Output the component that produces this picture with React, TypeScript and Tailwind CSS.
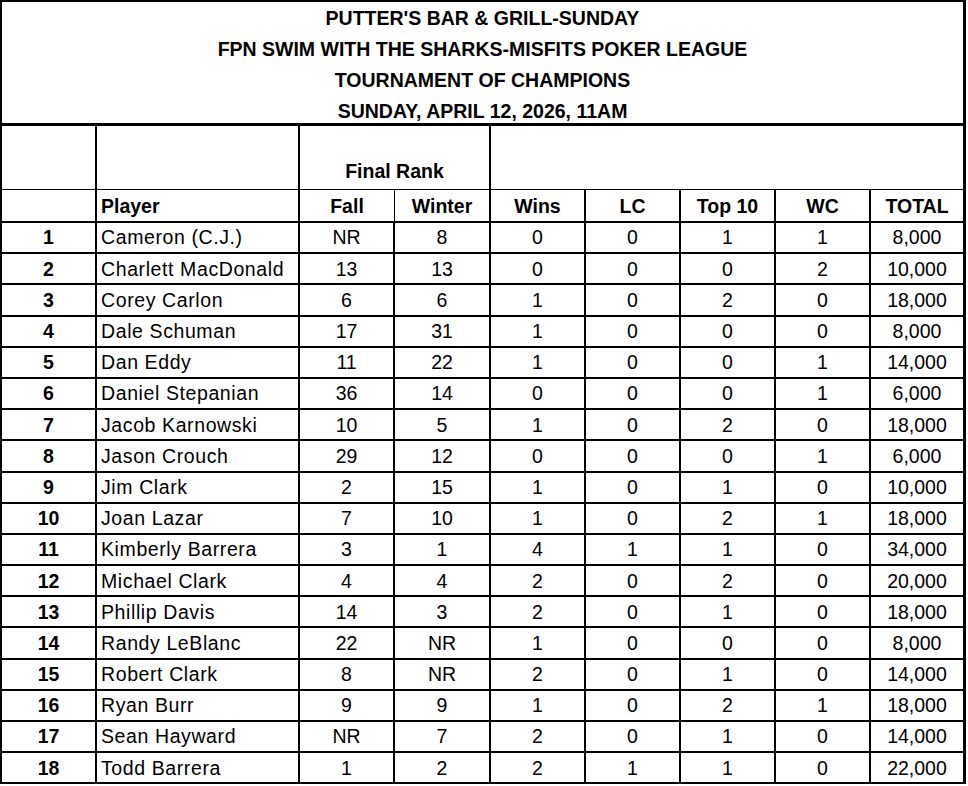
const titleLines = [
  "PUTTER'S BAR & GRILL-SUNDAY",
  "FPN SWIM WITH THE SHARKS-MISFITS POKER LEAGUE",
  "TOURNAMENT OF CHAMPIONS",
  "SUNDAY, APRIL 12, 2026, 11AM",
];

type Row = [string, string, string, number, number, number, number, string];

const rows: Row[] = [
  ["Cameron (C.J.)", "NR", "8", 0, 0, 1, 1, "8,000"],
  ["Charlett MacDonald", "13", "13", 0, 0, 0, 2, "10,000"],
  ["Corey Carlon", "6", "6", 1, 0, 2, 0, "18,000"],
  ["Dale Schuman", "17", "31", 1, 0, 0, 0, "8,000"],
  ["Dan Eddy", "11", "22", 1, 0, 0, 1, "14,000"],
  ["Daniel Stepanian", "36", "14", 0, 0, 0, 1, "6,000"],
  ["Jacob Karnowski", "10", "5", 1, 0, 2, 0, "18,000"],
  ["Jason Crouch", "29", "12", 0, 0, 0, 1, "6,000"],
  ["Jim Clark", "2", "15", 1, 0, 1, 0, "10,000"],
  ["Joan Lazar", "7", "10", 1, 0, 2, 1, "18,000"],
  ["Kimberly Barrera", "3", "1", 4, 1, 1, 0, "34,000"],
  ["Michael Clark", "4", "4", 2, 0, 2, 0, "20,000"],
  ["Phillip Davis", "14", "3", 2, 0, 1, 0, "18,000"],
  ["Randy LeBlanc", "22", "NR", 1, 0, 0, 0, "8,000"],
  ["Robert Clark", "8", "NR", 2, 0, 1, 0, "14,000"],
  ["Ryan Burr", "9", "9", 1, 0, 2, 1, "18,000"],
  ["Sean Hayward", "NR", "7", 2, 0, 1, 0, "14,000"],
  ["Todd Barrera", "1", "2", 2, 1, 1, 0, "22,000"],
];

const headers = ["Fall", "Winter", "Wins", "LC", "Top 10", "WC", "TOTAL"];

export default function App() {
  return (
    <div className="min-h-screen bg-white">
      <div className="w-[966px] border-l-2 border-t-2 border-r-[3px] border-black font-['Liberation_Sans',Arial,sans-serif] text-[19.5px] text-black">
        <div className="grid grid-cols-[95px_203px_95px_96px_95px_95px_95px_95px_92px]">
          {/* Title block */}
          <div className="col-span-9 h-[124px] border-b-[3px] border-black font-bold text-[19.5px] text-center">
            {titleLines.map((line) => (
              <div key={line} className="h-[31px] leading-[32px] whitespace-nowrap">
                {line}
              </div>
            ))}
          </div>

          {/* Header row 1 */}
          <div className="h-[64px] border-r-2 border-b border-black" />
          <div className="h-[64px] border-r-2 border-b border-black" />
          <div className="col-span-2 h-[64px] border-r-2 border-b border-black flex items-end justify-center pb-[3px] font-bold">
            Final Rank
          </div>
          <div className="col-span-5 h-[64px] border-b border-black" />

          {/* Header row 2 */}
          <div className="h-[33px] border-r-2 border-b-2 border-black" />
          <div className="h-[33px] border-r-2 border-b-2 border-black flex items-center pt-[3px] px-[4px] font-bold">
            Player
          </div>
          {headers.map((h, i) => (
            <div
              key={h}
              className={`h-[33px] border-b-2 border-black flex items-center justify-center pt-[3px] font-bold ${
                i === 0 ? "border-r" : i === headers.length - 1 ? "" : "border-r-2"
              }`}
            >
              {h}
            </div>
          ))}

          {/* Data rows */}
          {rows.map((r, idx) => (
            <Row key={r[0]} n={idx + 1} row={r} />
          ))}
        </div>
      </div>
    </div>
  );
}

function Row({ n, row }: { n: number; row: Row }) {
  const [name, fall, winter, ...rest] = row;
  const values = [fall, winter, ...rest];
  return (
    <>
      <div className="h-[31.2px] border-r-2 border-b-2 border-black flex items-center justify-center pt-[1px] font-bold">
        {n}
      </div>
      <div className="h-[31.2px] border-r-2 border-b-2 border-black flex items-center pt-[1px] px-[4px] tracking-[0.6px] whitespace-nowrap">
        {name}
      </div>
      {values.map((v, i) => (
        <div
          key={i}
          className={`h-[31.2px] border-b-2 border-black flex items-center justify-center pt-[1px] ${
            i === values.length - 1 ? "" : "border-r-2"
          }`}
        >
          {v}
        </div>
      ))}
    </>
  );
}
